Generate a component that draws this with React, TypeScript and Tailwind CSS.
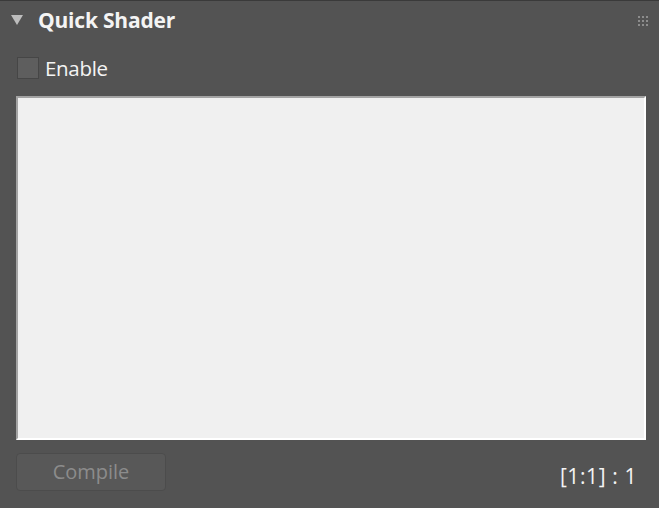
const dots = [0, 1, 2].flatMap((r) => [0, 1, 2].map((c) => ({ r, c })));

export default function App() {
  return (
    <div
      className="flex h-[508px] w-[659px] flex-col border-t border-[#3a3a3a] bg-[#535353] text-[#f4f4f4]"
      style={{ fontFamily: '"Open Sans", "Noto Sans", sans-serif' }}
    >
      <div className="flex h-[40px] items-center pl-[11px] pr-[11px]">
        <svg width="12" height="10" viewBox="0 0 12 10" className="mt-[-2px]">
          <polygon points="0,0 12,0 6,10" fill="#bdbdbd" />
        </svg>
        <span className="ml-[15px] text-[21px] font-bold tracking-[-0.2px]">Quick Shader</span>
        <svg width="10" height="10" viewBox="0 0 10 10" className="ml-auto">
          {dots.map((d) => (
            <rect key={`${d.r}-${d.c}`} x={d.c * 4} y={d.r * 4} width="2" height="2" fill="#8d8d8d" />
          ))}
        </svg>
      </div>

      <label className="mt-[16px] flex h-[22px] items-center pl-[17px]">
        <span className="h-[22px] w-[22px] border border-[#464646] bg-[#5e5e5e]" />
        <span className="ml-[6px] text-[20.5px] tracking-[-0.3px]">Enable</span>
      </label>

      <div className="ml-[16px] mr-[13px] mt-[17px] h-[344px] border-t-2 border-l-2 border-r-2 border-b-2 border-t-[#a3a3a3] border-l-[#a3a3a3] border-r-white border-b-white bg-[#f0f0f0]" />

      <div className="mt-[11px] flex items-center pl-[16px] pr-[22px]">
        <button className="h-[38px] w-[150px] rounded-[4px] border border-[#4c4c4c] bg-[#585858] text-[20px] text-[#8c8c8c]">
          Compile
        </button>
        <span className="ml-auto mt-[10px] text-[21px] tracking-[0.6px]">[1:1] : 1</span>
      </div>
    </div>
  );
}
